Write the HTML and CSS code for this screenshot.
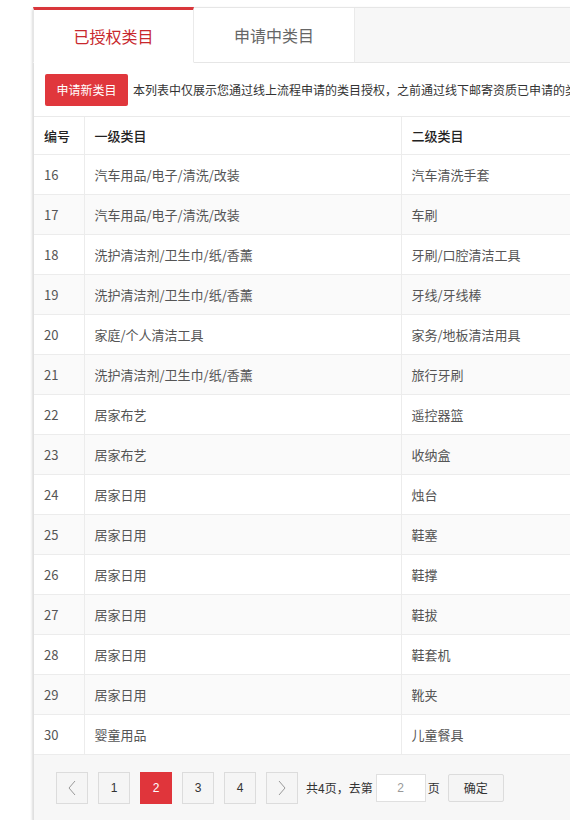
FILE: index.html
```html
<!DOCTYPE html>
<html lang="zh">
<head>
<meta charset="utf-8">
<title>类目管理</title>
<link rel="stylesheet" href="styles.css">
</head>
<body>
<div class="wrap">
  <div class="tabs">
    <div class="tab active">已授权类目</div>
    <div class="tab">申请中类目</div>
    <div class="tab-rest"></div>
  </div>
  <div class="panel">
    <div class="toolbar">
      <button class="btn-apply">申请新类目</button>
      <span class="notice">本列表中仅展示您通过线上流程申请的类目授权，之前通过线下邮寄资质已申请的类目不在此列表中展示，如有疑问请联系客服</span>
    </div>
    <table class="grid">
      <colgroup><col class="c-no"><col class="c-l1"><col class="c-l2"></colgroup>
      <thead>
        <tr><th>编号</th><th>一级类目</th><th>二级类目</th></tr>
      </thead>
      <tbody>
        <tr><td>16</td><td>汽车用品/电子/清洗/改装</td><td>汽车清洗手套</td></tr>
        <tr><td>17</td><td>汽车用品/电子/清洗/改装</td><td>车刷</td></tr>
        <tr><td>18</td><td>洗护清洁剂/卫生巾/纸/香薰</td><td>牙刷/口腔清洁工具</td></tr>
        <tr><td>19</td><td>洗护清洁剂/卫生巾/纸/香薰</td><td>牙线/牙线棒</td></tr>
        <tr><td>20</td><td>家庭/个人清洁工具</td><td>家务/地板清洁用具</td></tr>
        <tr><td>21</td><td>洗护清洁剂/卫生巾/纸/香薰</td><td>旅行牙刷</td></tr>
        <tr><td>22</td><td>居家布艺</td><td>遥控器篮</td></tr>
        <tr><td>23</td><td>居家布艺</td><td>收纳盒</td></tr>
        <tr><td>24</td><td>居家日用</td><td>烛台</td></tr>
        <tr><td>25</td><td>居家日用</td><td>鞋塞</td></tr>
        <tr><td>26</td><td>居家日用</td><td>鞋撑</td></tr>
        <tr><td>27</td><td>居家日用</td><td>鞋拔</td></tr>
        <tr><td>28</td><td>居家日用</td><td>鞋套机</td></tr>
        <tr><td>29</td><td>居家日用</td><td>靴夹</td></tr>
        <tr><td>30</td><td>婴童用品</td><td>儿童餐具</td></tr>
      </tbody>
    </table>
    <div class="pager">
      <span class="pg arrow"><svg width="10" height="16" viewBox="0 0 10 16"><path d="M8 1 L2 8 L8 15" fill="none" stroke="#999" stroke-width="1"/></svg></span>
      <span class="pg">1</span>
      <span class="pg cur">2</span>
      <span class="pg">3</span>
      <span class="pg">4</span>
      <span class="pg arrow"><svg width="10" height="16" viewBox="0 0 10 16"><path d="M2 1 L8 8 L2 15" fill="none" stroke="#999" stroke-width="1"/></svg></span>
      <span class="jump">
        <span class="pg-text">共4页，去第</span>
        <span class="pg-input">2</span>
        <span class="pg-text">页</span>
      </span>
      <button class="pg-ok">确定</button>
    </div>
  </div>
</div>
</body>
</html>
```

FILE: styles.css
```css
html, body {
  margin: 0;
  padding: 0;
  background: #fff;
  overflow: hidden;
}
body {
  font-family: "Noto Sans CJK SC", "Microsoft YaHei", sans-serif;
  color: #333;
  font-size: 13px;
}
.wrap {
  margin: 7px 0 0 33px;
  width: 760px;
  box-shadow: 0 2px 3px rgba(0, 0, 0, 0.25);
}
.tabs {
  display: flex;
  height: 55px;
  border-top: 1px solid #e6e6e6;
}
.tab {
  width: 161px;
  box-sizing: border-box;
  border-right: 1px solid #eaeaea;
  border-bottom: 1px solid #e6e6e6;
  display: flex;
  align-items: center;
  justify-content: center;
  font-size: 16px;
  color: #666;
  background: #fff;
}
.tab.active {
  color: #c8282d;
  border-top: 3px solid #d9363b;
  border-bottom-color: #fff;
  border-left: 1px solid #e6e6e6;
  margin-top: -1px;
}
.tab-rest {
  flex: 1;
  background: #f7f7f7;
  border-bottom: 1px solid #e6e6e6;
}
.panel {
  border-left: 1px solid #e0e0e0;
  background: #fff;
}
.toolbar {
  display: flex;
  align-items: center;
  height: 53px;
  padding-left: 11px;
  border-bottom: 1px solid #eaeaea;
}
.btn-apply {
  flex-shrink: 0;
  border: none;
  border-radius: 2px;
  background: #e0373c;
  color: #fff;
  font-family: inherit;
  font-size: 12px;
  height: 32px;
  width: 83px;
  padding: 0;
  margin-right: 5px;
}
.notice {
  font-size: 12px;
  color: #333;
  white-space: nowrap;
}
.grid {
  border-collapse: collapse;
  width: 100%;
  table-layout: fixed;
}
.c-no { width: 50px; }
.c-l1 { width: 317px; }
.grid th, .grid td {
  text-align: left;
  padding: 0 0 0 10px;
  height: 39px;
  border-bottom: 1px solid #ececec;
  border-right: 1px solid #ececec;
  white-space: nowrap;
}
.grid th {
  font-weight: 500;
  color: #222;
  height: 37px;
}
.grid td {
  color: #555;
}
.grid tbody tr:nth-child(even) td {
  background: #fafafa;
}
.pager {
  display: flex;
  align-items: center;
  gap: 10px;
  background: #f7f7f7;
  height: 65px;
  padding-left: 22px;
}
.pg {
  width: 32px;
  height: 32px;
  box-sizing: border-box;
  border: 1px solid #dcdcdc;
  background: #f5f5f5;
  display: flex;
  align-items: center;
  justify-content: center;
  font-family: "Liberation Sans", sans-serif;
  font-size: 12px;
  color: #333;
}
.pg.cur {
  background: #e0353b;
  border-color: #e0353b;
  color: #fff;
}
.jump {
  display: flex;
  align-items: center;
  gap: 2px;
  margin-left: -2px;
}
.pg-text {
  font-size: 12px;
  color: #333;
}
.pg-input {
  width: 50px;
  height: 28px;
  box-sizing: border-box;
  border: 1px solid #e0e0e0;
  background: #fff;
  color: #999;
  font-family: "Liberation Sans", sans-serif;
  font-size: 12px;
  display: flex;
  align-items: center;
  justify-content: center;
  margin-left: 1px;
}
.pg-ok {
  margin-left: -2px;
  width: 56px;
  height: 28px;
  border: 1px solid #dcdcdc;
  border-radius: 2px;
  background: #f5f5f5;
  font-family: inherit;
  font-size: 12px;
  color: #333;
  padding: 0;
}
```
